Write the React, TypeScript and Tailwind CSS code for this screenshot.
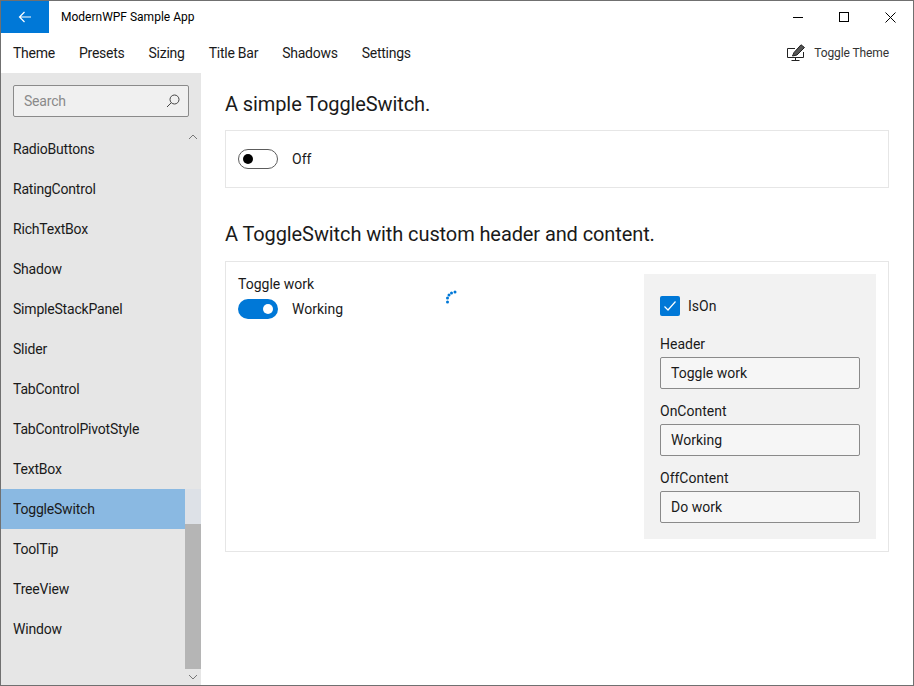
const font = "font-['Roboto','Noto_Sans',sans-serif]";

const menuItems = [
  { label: "Theme", cls: "ml-3" },
  { label: "Presets", cls: "ml-6" },
  { label: "Sizing", cls: "ml-6" },
  { label: "Title Bar", cls: "ml-6" },
  { label: "Shadows", cls: "ml-6" },
  { label: "Settings", cls: "ml-6" },
];

const pages = [
  "RadioButtons",
  "RatingControl",
  "RichTextBox",
  "Shadow",
  "SimpleStackPanel",
  "Slider",
  "TabControl",
  "TabControlPivotStyle",
  "TextBox",
  "ToggleSwitch",
  "ToolTip",
  "TreeView",
  "Window",
];

function ThemeIcon() {
  return (
    <svg width="19" height="18" viewBox="0 0 19 18" fill="none" stroke="#222" strokeWidth="1">
      <path d="M8 4.5H0.5V13.5H16.5V8" />
      <path d="M8.5 13.5V16.5M4.5 16.5H12.5" />
      <path d="M5.5 12L7 8.5L14 0.8L17.5 3.5L10 11L5.5 12Z" fill="#555" stroke="#222" />
    </svg>
  );
}

function SearchIcon() {
  return (
    <svg width="14" height="14" viewBox="0 0 14 14" fill="none" stroke="#444" strokeWidth="1">
      <circle cx="8.5" cy="5.5" r="4.5" />
      <path d="M5.2 8.8L1 13" />
    </svg>
  );
}

function Toggle({ on }: { on: boolean }) {
  return on ? (
    <div className="flex h-5 w-10 items-center justify-end rounded-full bg-[#0078d7] pr-[5px]">
      <div className="h-2.5 w-2.5 rounded-full bg-white" />
    </div>
  ) : (
    <div className="flex h-5 w-10 items-center rounded-full border border-[#5c5c5c] pl-[4px]">
      <div className="h-2.5 w-2.5 rounded-full bg-black" />
    </div>
  );
}

function Field({ label, value }: { label: string; value: string }) {
  return (
    <div className="mt-[12px] first:mt-0">
      <div className="h-[23px] text-sm leading-[21px] text-[#1a1a1a]">{label}</div>
      <div className="flex h-8 w-[200px] items-center rounded-[2px] border border-[#8a8a8a] bg-[#f6f6f6] px-[10px] text-sm text-[#1a1a1a]">
        {value}
      </div>
    </div>
  );
}

function Spinner() {
  const dots = [
    [1.5, 12],
    [1.5, 8],
    [3, 5],
    [5.5, 3],
    [9, 2],
  ];
  return (
    <svg width="12" height="14" viewBox="0 0 12 14" fill="#0078d7" className="mt-4">
      {dots.map(([x, y]) => (
        <circle key={`${x}-${y}`} cx={x} cy={y} r="1.5" />
      ))}
    </svg>
  );
}

export default function App() {
  return (
    <div className={`flex h-[686px] w-[914px] flex-col border border-[#707070] bg-white text-black ${font}`}>
      {/* Title bar */}
      <div className="flex h-8 items-center">
        <div className="flex h-8 w-12 items-center justify-center bg-[#0078d7]">
          <svg width="14" height="14" viewBox="0 0 14 14" fill="none" stroke="white" strokeWidth="1.2">
            <path d="M13 7H1.5M6.5 2L1.5 7L6.5 12" />
          </svg>
        </div>
        <div className="ml-3 text-xs">ModernWPF Sample App</div>
        <div className="ml-auto flex h-8">
          <div className="flex w-[46px] items-center justify-center">
            <div className="h-px w-[10px] bg-black" />
          </div>
          <div className="flex w-[46px] items-center justify-center">
            <div className="h-[10px] w-[10px] border border-black" />
          </div>
          <div className="flex w-[46px] items-center justify-center">
            <svg width="11" height="11" viewBox="0 0 11 11" stroke="black" strokeWidth="1">
              <path d="M0.5 0.5L10.5 10.5M10.5 0.5L0.5 10.5" />
            </svg>
          </div>
        </div>
      </div>

      {/* Menu bar */}
      <div className="flex h-10 items-center text-sm tracking-[-0.25px] text-[#1a1a1a]">
        {menuItems.map((m) => (
          <span key={m.label} className={m.cls}>
            {m.label}
          </span>
        ))}
        <div className="ml-auto mr-6 flex items-center gap-2 text-xs tracking-[-0.1px] text-[#333]">
          <ThemeIcon />
          <span>Toggle Theme</span>
        </div>
      </div>

      <div className="flex min-h-0 flex-1">
        {/* Sidebar */}
        <div className="relative w-[200px] shrink-0 overflow-hidden bg-[#e6e6e6]">
          <div className="px-3 pt-3">
            <div className="flex h-8 items-center justify-between rounded-[2px] border border-[#8a8a8a] bg-[#f0f0f0] pl-[10px] pr-[8px] text-sm tracking-[-0.2px] text-[#8a8a8a]">
              <span>Search</span>
              <SearchIcon />
            </div>
          </div>
          <div className="mt-3">
            {pages.map((p) => (
              <div
                key={p}
                className={`flex h-10 items-center pl-3 text-sm tracking-[-0.2px] text-[#1a1a1a] ${p === "ToggleSwitch" ? "bg-[#8ab9e2]" : ""}`}
              >
                {p}
              </div>
            ))}
          </div>
          {/* Scrollbar lies over the list */}
          <div className="absolute bottom-0 right-0 top-[56px] flex w-4 flex-col">
            <div className="flex h-4 items-center justify-center">
              <svg width="10" height="6" viewBox="0 0 10 6" fill="none" stroke="#777" strokeWidth="1">
                <path d="M1 5L5 1L9 5" />
              </svg>
            </div>
            <div className="flex-1" />
            <div className="h-[35px] bg-[#dde1e7]" />
            <div className="h-[145px] bg-[#b5b5b5]" />
            <div className="flex h-4 items-center justify-center">
              <svg width="10" height="6" viewBox="0 0 10 6" fill="none" stroke="#777" strokeWidth="1">
                <path d="M1 1L5 5L9 1" />
              </svg>
            </div>
          </div>
        </div>

        {/* Content */}
        <div className="min-w-0 flex-1 pl-6 pr-6 pt-[16px] text-[#1a1a1a]">
          <h2 className="h-[30px] text-[20px] font-normal leading-[30px] tracking-[-0.1px]">A simple ToggleSwitch.</h2>
          <div className="mt-[11px] flex h-[58px] items-center gap-[14px] border border-[#e6e6e6] pl-3 text-sm">
            <Toggle on={false} />
            <span>Off</span>
          </div>

          <h2 className="mt-[31px] h-[30px] text-[20px] font-normal leading-[30px] tracking-[-0.1px]">
            A ToggleSwitch with custom header and content.
          </h2>
          <div className="mt-[12px] flex h-[291px] justify-between border border-[#e6e6e6] pb-3 pl-3 pr-3 pt-3">
            <div className="flex">
              <div className="w-[208px]">
                <div className="h-[25px] text-sm leading-[20px]">Toggle work</div>
                <div className="flex items-center gap-[14px] text-sm">
                  <Toggle on />
                  <span>Working</span>
                </div>
              </div>
              <Spinner />
            </div>
            <div className="w-[232px] bg-[#f2f2f2] px-4 pt-[22px]">
              <div className="flex h-5 items-center gap-2 text-sm">
                <div className="flex h-5 w-5 items-center justify-center rounded-[2px] bg-[#0078d7]">
                  <svg width="14" height="12" viewBox="0 0 14 12" fill="none" stroke="white" strokeWidth="1.2">
                    <path d="M1.5 6.5L5 10L12.5 1.5" />
                  </svg>
                </div>
                <span>IsOn</span>
              </div>
              <div className="mt-[18px]">
                <Field label="Header" value="Toggle work" />
                <Field label="OnContent" value="Working" />
                <Field label="OffContent" value="Do work" />
              </div>
            </div>
          </div>
        </div>
      </div>
    </div>
  );
}
